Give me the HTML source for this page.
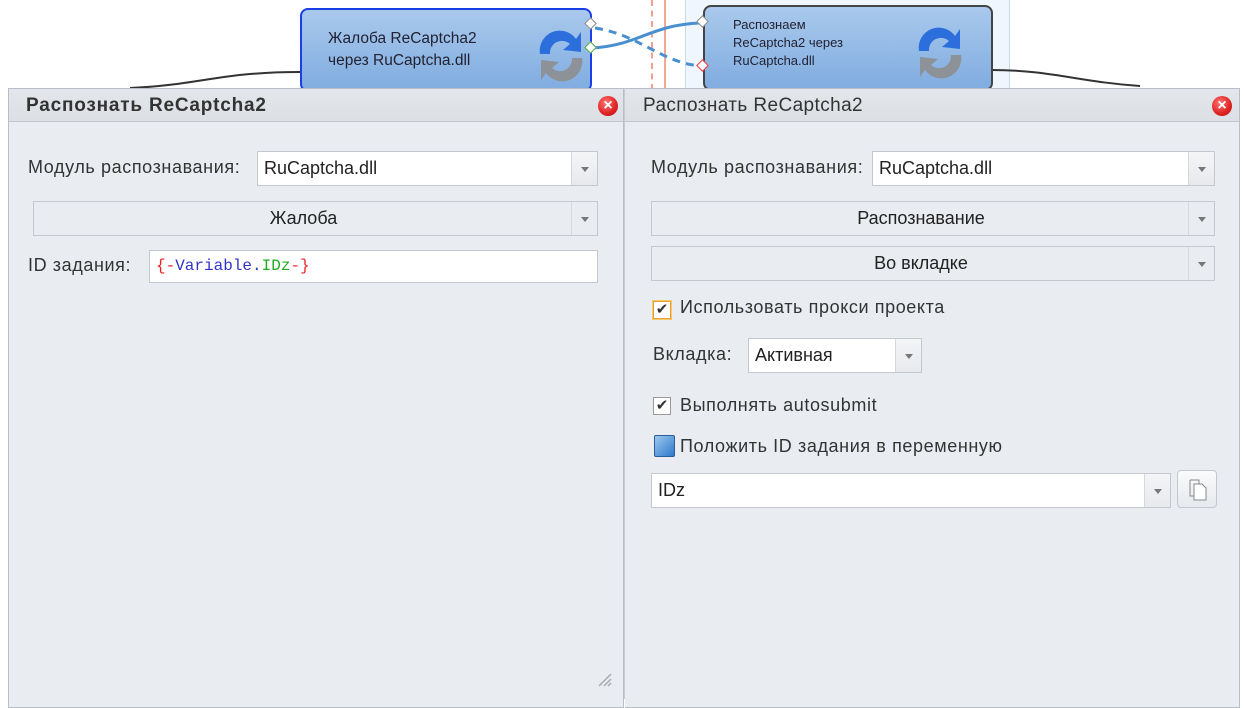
<!DOCTYPE html>
<html><head><meta charset="utf-8"><style>
*{box-sizing:border-box;margin:0;padding:0}
body{width:1244px;height:699px;overflow:hidden;background:#fff;position:relative;font-family:"Liberation Sans",sans-serif;font-size:18px;color:#222}
.abs{position:absolute}
.panel{position:absolute;background:#e9edf2;border:1px solid #b9bec6}
.hdr{position:absolute;left:0;right:0;top:0;height:33px;background:linear-gradient(#e3e6ea,#dcdfe3);border-bottom:1px solid #c3c7cd}
.hdr span{position:absolute;left:17px;top:6px;font-size:19px;color:#333;letter-spacing:0.4px}
.x{position:absolute;width:20px;height:20px;border-radius:50%;background:radial-gradient(circle at 40% 35%,#f77,#d22 60%,#b11);color:#fff;font-size:16px;font-weight:bold;text-align:center;line-height:20px}
.combo{position:absolute;background:#fff;border:1px solid #c5c9cf;height:35px;padding-left:6px;line-height:33px;font-size:18px}
.combo.g{background:#e9ecf0;text-align:center;padding-left:0;padding-right:24px}
.combo.d:after{content:"";position:absolute;right:0;top:0;bottom:0;width:25px;border-left:1px solid #d5d8dc;background:linear-gradient(#f4f5f7,#e7e9ec)}
.combo i{position:absolute;right:8px;top:15px;width:0;height:0;border-left:4px solid transparent;border-right:4px solid transparent;border-top:5px solid #777;z-index:2}
.combo.g:after{background:none}
.lbl{position:absolute;font-size:18px;color:#333;letter-spacing:0.6px}
.cb{position:absolute;width:18px;height:18px;border:1px solid #999;background:#fff;font-size:15px;line-height:16px;text-align:center;color:#333}
</style></head><body>
<div class="abs" style="left:685px;top:0;width:325px;height:90px;background:#f0f6fd;border-left:1px solid #c8dcf0;border-right:1px solid #c8dcf0"></div>
<div class="abs" style="left:651px;top:0;height:90px;border-left:2px dashed #f4a090"></div>
<div class="abs" style="left:664px;top:0;width:2px;height:90px;background:#f2a694"></div>
<svg class="abs" style="left:0;top:0" width="1244" height="90">
<path d="M130 88 C200 85 220 72 300 72" stroke="#333" stroke-width="2" fill="none"/>
<path d="M992 70 C1050 70 1080 82 1140 86" stroke="#333" stroke-width="2" fill="none"/>
<path d="M592 48 C640 45 650 25 700 23" stroke="#4a8fd0" stroke-width="3" fill="none"/>
<path d="M595 28 C640 35 660 62 700 66" stroke="#4a8fd0" stroke-width="3" stroke-dasharray="8 6" fill="none"/>
</svg>
<div class="abs" style="left:300px;top:8px;width:292px;height:84px;border:2px solid #1a3ee8;border-radius:8px;background:linear-gradient(#a9c9ec,#80ace0)">
<div class="abs" style="left:26px;top:18px;font-size:15.5px;line-height:22px;color:#223">Жалоба ReCaptcha2<br>через RuCaptcha.dll</div>
<svg class="abs" style="left:234px;top:14px" width="52" height="60"><path d="M4 30 A20 20 0 0 1 40 15 L45 8 L45 28 L27 26 L34 20 A12 12 0 0 0 14 30Z" fill="#2c6fdc"/><path d="M46 34 A20 20 0 0 1 10 49 L5 56 L5 36 L23 38 L16 44 A12 12 0 0 0 36 34Z" fill="#8d9299"/></svg>
</div>
<div class="abs" style="left:586px;top:19px;width:9px;height:9px;background:#fff;border:1px solid #888;transform:rotate(45deg)"></div>
<div class="abs" style="left:586px;top:43px;width:9px;height:9px;background:#fff;border:1px solid #4a4;transform:rotate(45deg)"></div>
<div class="abs" style="left:703px;top:5px;width:290px;height:86px;border:2px solid #444;border-radius:8px;background:linear-gradient(#a9c9ec,#80ace0)">
<div class="abs" style="left:28px;top:9px;font-size:13px;line-height:18px;color:#223">Распознаем<br>ReCaptcha2 через<br>RuCaptcha.dll</div>
<svg class="abs" style="left:210px;top:14px" width="52" height="60"><path d="M4 30 A20 20 0 0 1 40 15 L45 8 L45 28 L27 26 L34 20 A12 12 0 0 0 14 30Z" fill="#2c6fdc"/><path d="M46 34 A20 20 0 0 1 10 49 L5 56 L5 36 L23 38 L16 44 A12 12 0 0 0 36 34Z" fill="#8d9299"/></svg>
</div>
<div class="abs" style="left:698px;top:17px;width:9px;height:9px;background:#fff;border:1px solid #888;transform:rotate(45deg)"></div>
<div class="abs" style="left:698px;top:61px;width:9px;height:9px;background:#fff;border:1px solid #e33;transform:rotate(45deg)"></div>

<div class="panel" style="left:8px;top:88px;width:616px;height:620px">
<div class="hdr"><span style="font-weight:bold;font-size:19px;letter-spacing:0.8px">Распознать ReCaptcha2</span></div>
<div class="x" style="left:589px;top:7px">×</div>
<div class="lbl" style="left:19px;top:68px">Модуль распознавания:</div>
<div class="combo d" style="left:248px;top:62px;width:341px"><i></i>RuCaptcha.dll</div>
<div class="combo g d" style="left:24px;top:112px;width:565px"><i></i>Жалоба</div>
<div class="lbl" style="left:19px;top:166px">ID задания:</div>
<div class="combo" style="left:140px;top:161px;width:449px;height:33px;line-height:31px;font-family:'Liberation Mono',monospace;font-size:16px"><span style="color:#e22">{-</span><span style="color:#33c">Variable.</span><span style="color:#2a2">IDz</span><span style="color:#e22">-}</span></div>
<svg class="abs" style="left:588px;top:583px" width="16" height="16"><path d="M2 14L14 2M7 14L14 7M11 14L14 11" stroke="#aaa" stroke-width="1.5"/></svg>
</div>
<div class="abs" style="left:624px;top:88px;width:18px;height:611px;background:linear-gradient(90deg,#c8ccd2,#e4e7eb)"></div>

<div class="panel" style="left:625px;top:88px;width:615px;height:620px;border-left:none">
<div class="hdr"><span style="left:18px;font-size:19px">Распознать ReCaptcha2</span></div>
<div class="x" style="left:587px;top:7px">×</div>
<div class="lbl" style="left:26px;top:68px">Модуль распознавания:</div>
<div class="combo d" style="left:247px;top:62px;width:343px"><i></i>RuCaptcha.dll</div>
<div class="combo g d" style="left:26px;top:112px;width:564px"><i></i>Распознавание</div>
<div class="combo g d" style="left:26px;top:157px;width:564px"><i></i>Во вкладке</div>
<div class="cb" style="left:28px;top:212px;border-color:#e8a030;box-shadow:0 0 0 1px #f7c96a">✔</div>
<div class="lbl" style="left:55px;top:208px">Использовать прокси проекта</div>
<div class="lbl" style="left:28px;top:255px">Вкладка:</div>
<div class="combo d" style="left:123px;top:249px;width:174px"><i></i>Активная</div>
<div class="cb" style="left:28px;top:308px">✔</div>
<div class="lbl" style="left:55px;top:306px">Выполнять autosubmit</div>
<div class="abs" style="left:29px;top:346px;width:21px;height:22px;background:linear-gradient(135deg,#9cc8ef,#2f79c9);border:1px solid #2a5d9a;border-radius:2px"></div>
<div class="lbl" style="left:55px;top:347px">Положить ID задания в переменную</div>
<div class="combo d" style="left:26px;top:384px;width:520px"><i></i>IDz</div>
<div class="abs" style="left:552px;top:381px;width:40px;height:38px;border:1px solid #c5c9cf;border-radius:4px;background:linear-gradient(#fafbfc,#e6e9ed)">
<svg class="abs" style="left:10px;top:7px" width="20" height="24"><path d="M2 2h9l0 4M2 2v16h4" fill="none" stroke="#888"/><path d="M6 6h8l4 4v12H6z" fill="#fff" stroke="#888"/></svg></div>
</div>
</body></html>
